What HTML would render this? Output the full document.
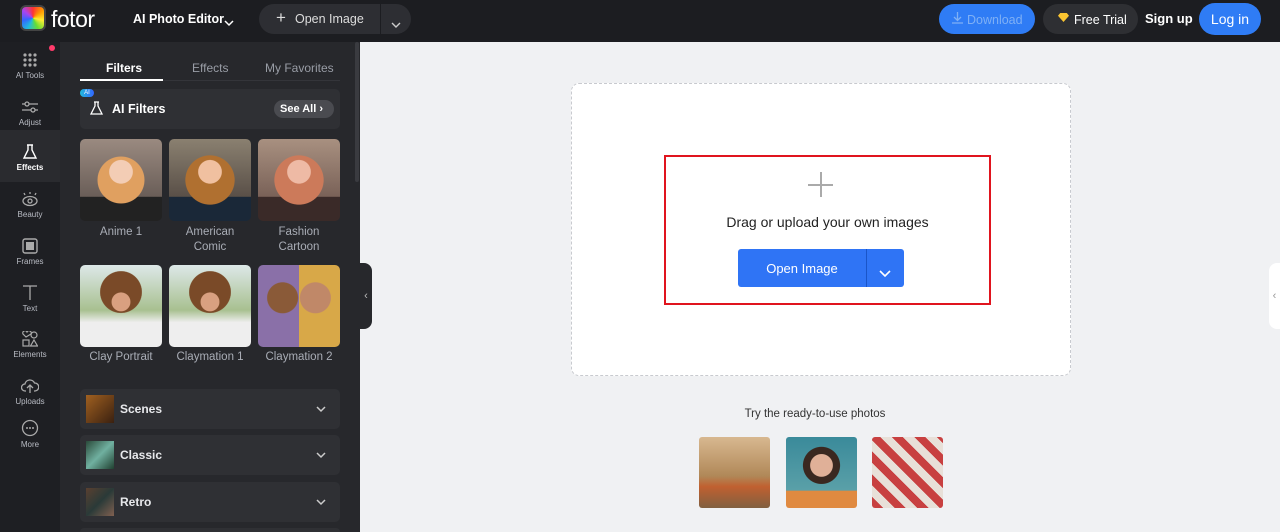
<!DOCTYPE html>
<html style="width:1280px;height:532px;overflow:hidden"><head><meta charset="utf-8"><style>
*{box-sizing:border-box;margin:0;padding:0}
body{width:1280px;height:532px;overflow:hidden;background:#f0f1f3;font-family:"Liberation Sans",sans-serif;position:relative}
.abs{position:absolute}
.top{left:0;top:0;width:1280px;height:42px;background:#1c1d21}
.rail{left:0;top:42px;width:60px;height:490px;background:#1e1f23}
.panel{left:60px;top:42px;width:300px;height:490px;background:#27282c;overflow:hidden}
.ri{position:absolute;left:0;width:60px;text-align:center;color:#b9bcc4;font-size:8px}
.ri svg{display:block;margin:0 auto 3px}
.card{position:absolute;left:20px;width:260px;height:40px;background:#2f3034;border-radius:5px;color:#e8e9ec;font-size:12px;font-weight:bold}
.thumb{position:absolute;width:82px;height:82px;border-radius:5px;overflow:hidden}
.lbl{position:absolute;width:90px;text-align:center;color:#a9adb6;font-size:11.5px;line-height:15px}
.chev{position:absolute;right:14px;top:17px}
</style></head><body>
<div class="abs top">
 <div class="abs" style="left:20px;top:5px;width:26px;height:26px;border-radius:6px;background:conic-gradient(#f33,#f90,#fe3,#6d3,#2bd,#36f,#a4e,#f33);border:2px solid #444"></div>
 <div class="abs" style="left:51px;top:6px;color:#fff;font-size:23px;letter-spacing:-0.5px">fotor</div>
 <div class="abs" style="left:133px;top:12px;color:#fff;font-size:12.5px;font-weight:bold">AI Photo Editor</div>
 <div class="abs" style="left:224px;top:14px"><svg width="10" height="7" fill="none" stroke="#fff" stroke-width="1.5"><path d="M1 1l4 4 4-4"/></svg></div>
 <div class="abs" style="left:259px;top:4px;width:152px;height:30px;border-radius:15px;background:#2d2e33"></div>
 <div class="abs" style="left:380px;top:4px;width:1px;height:30px;background:#1c1d21"></div>
 <div class="abs" style="left:276px;top:8px;color:#ddd;font-size:17px">+</div>
 <div class="abs" style="left:295px;top:12px;color:#ddd;font-size:12.5px">Open Image</div>
 <div class="abs" style="left:391px;top:16px"><svg width="10" height="7" fill="none" stroke="#ccc" stroke-width="1.4"><path d="M1 1l4 4 4-4"/></svg></div>
 <div class="abs" style="left:939px;top:4px;width:96px;height:30px;border-radius:15px;background:#2f7cf5;color:#7fb0f5;font-size:12.5px;padding:9px 0 0 28px">Download</div>
 <div class="abs" style="left:951px;top:11px"><svg width="13" height="13" fill="none" stroke="#7fb0f5" stroke-width="1.3"><path d="M6.5 1v8M3 6l3.5 3.5L10 6M1 12h11"/></svg></div>
 <div class="abs" style="left:1043px;top:4px;width:95px;height:30px;border-radius:15px;background:#2e2f33;color:#fff;font-size:12.5px;padding:9px 0 0 31px">Free Trial</div>
 <div class="abs" style="left:1058px;top:13px;width:11px;height:9px;background:#fbc531;clip-path:polygon(0 30%,20% 0,80% 0,100% 30%,50% 100%)"></div>
 <div class="abs" style="left:1145px;top:11px;color:#fff;font-size:13px;font-weight:bold">Sign up</div>
 <div class="abs" style="left:1199px;top:3px;width:62px;height:32px;border-radius:16px;background:#2f7cf5;color:#fff;font-size:14px;text-align:center;padding-top:8px">Log in</div>
</div>
<div class="abs rail">
 <div class="abs" style="left:49px;top:3px;width:6px;height:6px;border-radius:3px;background:#ff3b6b"></div>
 <div class="ri" style="top:10px"><svg width="16" height="16"><g fill="#aaa"><circle cx="3" cy="3" r="1.6"/><circle cx="8" cy="3" r="1.6"/><circle cx="13" cy="3" r="1.6"/><circle cx="3" cy="8" r="1.6"/><circle cx="8" cy="8" r="1.6"/><circle cx="13" cy="8" r="1.6"/><circle cx="3" cy="13" r="1.6"/><circle cx="8" cy="13" r="1.6"/><circle cx="13" cy="13" r="1.6"/></g></svg>AI Tools</div>
 <div class="ri" style="top:57px"><svg width="18" height="16" fill="none" stroke="#aaa" stroke-width="1.3"><path d="M1 5h16M1 11h16"/><circle cx="6" cy="5" r="2" fill="#1e1f23"/><circle cx="12" cy="11" r="2" fill="#1e1f23"/></svg>Adjust</div>
 <div class="abs" style="left:0;top:88px;width:60px;height:52px;background:#2a2b2f"></div>
 <div class="ri" style="top:102px;color:#fff;font-weight:bold"><svg width="16" height="16" fill="none" stroke="#fff" stroke-width="1.4"><path d="M5 1h6M6 1v5L2 14h12L10 6V1"/></svg>Effects</div>
 <div class="ri" style="top:149px"><svg width="18" height="16" fill="none" stroke="#aaa" stroke-width="1.3"><ellipse cx="9" cy="10" rx="7" ry="4.5"/><circle cx="9" cy="10" r="2"/><path d="M9 1v2M3 2l1 2M15 2l-1 2"/></svg>Beauty</div>
 <div class="ri" style="top:196px"><svg width="16" height="16"><rect x="1" y="1" width="14" height="14" rx="2" fill="none" stroke="#aaa" stroke-width="1.4"/><rect x="4" y="4" width="8" height="8" fill="#aaa"/></svg>Frames</div>
 <div class="ri" style="top:242px"><svg width="16" height="17" fill="none" stroke="#aaa" stroke-width="1.3"><path d="M1 2h14M8 2v14"/></svg>Text</div>
 <div class="ri" style="top:289px"><svg width="16" height="16" fill="none" stroke="#aaa" stroke-width="1.2"><path d="M4 6L1 3a2 2 0 014-2 2 2 0 014 2z"/><circle cx="12" cy="4" r="3"/><rect x="1" y="9" width="6" height="6"/><path d="M12 9l3.5 6h-7z"/></svg>Elements</div>
 <div class="ri" style="top:336px"><svg width="18" height="16" fill="none" stroke="#aaa" stroke-width="1.3"><path d="M5 13H4a3.5 3.5 0 010-7 5 5 0 019.5-1A3.5 3.5 0 0114 13h-1M9 15V8M6 10l3-3 3 3"/></svg>Uploads</div>
 <div class="ri" style="top:377px"><svg width="18" height="18" fill="none" stroke="#aaa" stroke-width="1.3"><circle cx="9" cy="9" r="7.5"/><g fill="#aaa" stroke="none"><circle cx="6" cy="9" r="1"/><circle cx="9" cy="9" r="1"/><circle cx="12" cy="9" r="1"/></g></svg>More</div>
</div>
<div class="abs panel">
 <div class="abs" style="left:46px;top:19px;color:#fff;font-size:12px;font-weight:bold">Filters</div>
 <div class="abs" style="left:132px;top:19px;color:#999da6;font-size:12px">Effects</div>
 <div class="abs" style="left:205px;top:19px;color:#999da6;font-size:12px">My Favorites</div>
 <div class="abs" style="left:20px;top:38px;width:260px;height:1px;background:#34353a"></div>
 <div class="abs" style="left:20px;top:37px;width:83px;height:2px;background:#fff"></div>
 <div class="abs" style="left:20px;top:47px;width:260px;height:40px;background:#2f3034;border-radius:5px"></div>
 <div class="abs" style="left:20px;top:47px;width:14px;height:8px;border-radius:4px;background:linear-gradient(90deg,#2bd,#36f);color:#fff;font-size:6px;text-align:center;line-height:8px">AI</div>
 <div class="abs" style="left:30px;top:59px"><svg width="14" height="15" fill="none" stroke="#fff" stroke-width="1.3"><path d="M4 1h5M5 1v4L1 13h11L8 5V1"/></svg></div>
 <div class="abs" style="left:52px;top:60px;color:#fff;font-size:12.5px;font-weight:bold">AI Filters</div>
 <div class="abs" style="left:214px;top:58px;width:60px;height:18px;border-radius:9px;background:#4a4b50;color:#fff;font-size:11px;font-weight:bold;padding:3px 0 0 6px">See All ›</div>
 <div class="thumb" style="left:20px;top:97px;background:radial-gradient(circle at 50% 40%,#f3cdb5 0 18%,transparent 19%),radial-gradient(ellipse at 50% 50%,#e0a060 0 40%,transparent 41%),linear-gradient(#9a8a80,#6a5e58 70%,#222 71%)"></div>
 <div class="thumb" style="left:109px;top:97px;background:radial-gradient(circle at 50% 40%,#f0c0a0 0 18%,transparent 19%),radial-gradient(ellipse at 50% 50%,#b07030 0 42%,transparent 43%),linear-gradient(#8a8070,#5a5048 70%,#1a2838 71%)"></div>
 <div class="thumb" style="left:198px;top:97px;background:radial-gradient(circle at 50% 40%,#eebaa5 0 18%,transparent 19%),radial-gradient(ellipse at 50% 50%,#cc7a5a 0 42%,transparent 43%),linear-gradient(#a89080,#7a6258 70%,#3a2a28 71%)"></div>
 <div class="lbl" style="left:16px;top:183px">Anime 1</div>
 <div class="lbl" style="left:105px;top:183px">American<br>Comic</div>
 <div class="lbl" style="left:194px;top:183px">Fashion<br>Cartoon</div>
 <div class="thumb" style="left:20px;top:223px;background:radial-gradient(circle at 50% 45%,#d9a080 0 15%,transparent 16%),radial-gradient(circle at 50% 33%,#7a4a28 0 30%,transparent 31%),linear-gradient(#dde8e8,#a8c090 55%,#eee 70%)"></div>
 <div class="thumb" style="left:109px;top:223px;background:radial-gradient(circle at 50% 45%,#d9a080 0 15%,transparent 16%),radial-gradient(circle at 50% 33%,#7a4a28 0 30%,transparent 31%),linear-gradient(#dde8e8,#a8c090 55%,#eee 70%)"></div>
 <div class="thumb" style="left:198px;top:223px;background:radial-gradient(circle at 30% 40%,#8a5a38 0 20%,transparent 21%),radial-gradient(circle at 70% 40%,#c08868 0 20%,transparent 21%),linear-gradient(90deg,#8a70a8 50%,#d8a848 50%)"></div>
 <div class="lbl" style="left:16px;top:308px">Clay Portrait</div>
 <div class="lbl" style="left:105px;top:308px">Claymation 1</div>
 <div class="lbl" style="left:194px;top:308px">Claymation 2</div>
 <div class="card" style="top:347px"><div class="abs" style="left:6px;top:6px;width:28px;height:28px;background:linear-gradient(135deg,#a06020,#3a2010)"></div><div class="abs" style="left:40px;top:13px">Scenes</div><svg class="chev" width="10" height="7" fill="none" stroke="#ccc" stroke-width="1.5"><path d="M1 1l4 4 4-4"/></svg></div>
 <div class="card" style="top:393px"><div class="abs" style="left:6px;top:6px;width:28px;height:28px;background:linear-gradient(135deg,#2a4a3a,#70b0a0,#204030)"></div><div class="abs" style="left:40px;top:13px">Classic</div><svg class="chev" width="10" height="7" fill="none" stroke="#ccc" stroke-width="1.5"><path d="M1 1l4 4 4-4"/></svg></div>
 <div class="card" style="top:440px"><div class="abs" style="left:6px;top:6px;width:28px;height:28px;background:linear-gradient(135deg,#5a4030,#2a3a38,#806050)"></div><div class="abs" style="left:40px;top:13px">Retro</div><svg class="chev" width="10" height="7" fill="none" stroke="#ccc" stroke-width="1.5"><path d="M1 1l4 4 4-4"/></svg></div>
 <div class="card" style="top:486px;height:4px;border-radius:5px 5px 0 0"></div>
 <div class="abs" style="left:295px;top:0;width:4px;height:140px;background:#3a3b40;border-radius:2px"></div>
</div>
<div class="abs" style="left:360px;top:263px;width:12px;height:66px;background:#27282c;border-radius:0 8px 8px 0;color:#bbb;font-size:11px;line-height:66px;text-align:center">‹</div>
<div class="abs" style="left:1269px;top:263px;width:11px;height:66px;background:#fff;border-radius:8px 0 0 8px;color:#999;font-size:11px;line-height:66px;text-align:center">‹</div>
<div class="abs" style="left:571px;top:83px;width:500px;height:293px;background:#fff;border:1px dashed #c8cacf;border-radius:8px"></div>
<div class="abs" style="left:664px;top:155px;width:327px;height:150px;border:2px solid #e0141e"></div>
<div class="abs" style="left:808px;top:184px;width:25px;height:1.5px;background:#aaa"></div>
<div class="abs" style="left:820px;top:172px;width:1.5px;height:25px;background:#aaa"></div>
<div class="abs" style="left:664px;top:214px;width:327px;text-align:center;color:#222;font-size:14px">Drag or upload your own images</div>
<div class="abs" style="left:738px;top:249px;width:166px;height:38px;background:#2f74f5;border-radius:3px"></div>
<div class="abs" style="left:866px;top:249px;width:1px;height:38px;background:#1a55c8"></div>
<div class="abs" style="left:738px;top:261px;width:128px;text-align:center;color:#fff;font-size:13px">Open Image</div>
<div class="abs" style="left:879px;top:265px"><svg width="12" height="8" fill="none" stroke="#fff" stroke-width="1.6"><path d="M1 1l5 5 5-5"/></svg></div>
<div class="abs" style="left:600px;top:408px;width:430px;text-align:center;color:#333;font-size:11.5px">Try the ready-to-use photos</div>
<div class="abs" style="left:699px;top:437px;width:71px;height:71px;border-radius:3px;background:linear-gradient(#d8b890,#b08858 55%,#c06030 70%,#806040)"></div>
<div class="abs" style="left:786px;top:437px;width:71px;height:71px;border-radius:3px;background:radial-gradient(circle at 50% 40%,#e0b098 0 20%,transparent 21%),radial-gradient(circle at 50% 40%,#3a2820 0 33%,transparent 34%),linear-gradient(#3a8a9a,#5aa0a8 75%,#e08a40 76%)"></div>
<div class="abs" style="left:872px;top:437px;width:71px;height:71px;border-radius:3px;background:repeating-linear-gradient(45deg,#c84040 0 8px,#e8e0d8 8px 16px)"></div>
</body></html>
